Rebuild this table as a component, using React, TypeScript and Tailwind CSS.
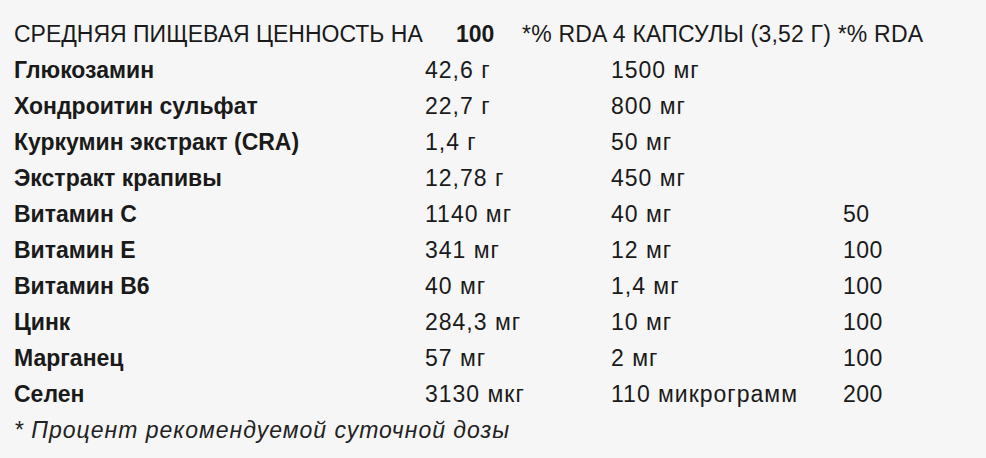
const rows: [string, string, string, string][] = [
  ['Глюкозамин', '42,6 г', '1500 мг', ''],
  ['Хондроитин сульфат', '22,7 г', '800 мг', ''],
  ['Куркумин экстракт (CRA)', '1,4 г', '50 мг', ''],
  ['Экстракт крапивы', '12,78 г', '450 мг', ''],
  ['Витамин С', '1140 мг', '40 мг', '50'],
  ['Витамин Е', '341 мг', '12 мг', '100'],
  ['Витамин В6', '40 мг', '1,4 мг', '100'],
  ['Цинк', '284,3 мг', '10 мг', '100'],
  ['Марганец', '57 мг', '2 мг', '100'],
  ['Селен', '3130 мкг', '110 микрограмм', '200'],
]

export default function App() {
  return (
    <div
      className="h-[458px] w-[986px] overflow-hidden bg-[#f6f6f6] pl-[14px] pt-[16px] text-[23px] text-[#1a1a1a]"
      style={{ fontFamily: '"Liberation Sans", Arial, sans-serif' }}
    >
      <div className="flex h-[36px] items-center whitespace-nowrap">
        <span className="w-[442px]">СРЕДНЯЯ ПИЩЕВАЯ ЦЕННОСТЬ НА</span>
        <span className="w-[66px] font-bold">100</span>
        <span className="tracking-[0.2px]">*% RDA 4 КАПСУЛЫ (3,52 Г) *% RDA</span>
      </div>

      {rows.map(([name, per100, perServing, rda]) => (
        <div key={name} className="grid h-[36px] grid-cols-[411px_186px_232px_1fr] items-center whitespace-nowrap">
          <span className="font-bold">{name}</span>
          <span className="tracking-[1px]">{per100}</span>
          <span className="tracking-[1px]">{perServing}</span>
          <span className="tracking-[0.5px]">{rda}</span>
        </div>
      ))}

      <div className="flex h-[36px] items-center whitespace-nowrap italic tracking-[1px] text-[#222]">
        * Процент рекомендуемой суточной дозы
      </div>
    </div>
  )
}
